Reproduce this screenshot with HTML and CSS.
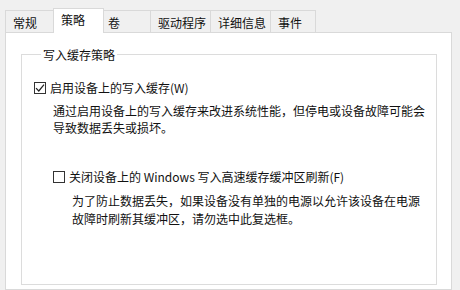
FILE: index.html
```html
<!DOCTYPE html>
<html lang="zh-CN">
<head>
<meta charset="utf-8">
<title>策略</title>
<link rel="stylesheet" href="styles.css">
</head>
<body>
<div class="dialog">
  <div class="tabs">
    <div class="tab w48">常规</div>
    <div class="tab active">策略</div>
    <div class="tab w46 narrow">卷</div>
    <div class="tab w60">驱动程序</div>
    <div class="tab w60">详细信息</div>
    <div class="tab w46 last">事件</div>
  </div>
  <div class="panel">
    <fieldset class="group">
      <legend class="legend">写入缓存策略</legend>
      <label class="row">
        <span class="check checked"><svg viewBox="0 0 12 12" width="12" height="12"><polyline points="2,6.2 4.8,9 10,2.6" fill="none" stroke="#222" stroke-width="1.2"/></svg></span>
        <span>启用设备上的写入缓存(W)</span>
      </label>
      <p class="desc">通过启用设备上的写入缓存来改进系统性能，但停电或设备故障可能会导致数据丢失或损坏。</p>
      <div class="sub">
        <label class="row">
          <span class="check"></span>
          <span>关闭设备上的 Windows 写入高速缓存缓冲区刷新(F)</span>
        </label>
        <p class="desc">为了防止数据丢失，如果设备没有单独的电源以允许该设备在电源故障时刷新其缓冲区，请勿选中此复选框。</p>
      </div>
    </fieldset>
  </div>
</div>
</body>
</html>
```

FILE: styles.css
```css
html, body {
  margin: 0;
  padding: 0;
}
body {
  width: 460px;
  height: 290px;
  overflow: hidden;
  background: #f0f0f0;
  font-family: "Microsoft YaHei UI", "Noto Sans CJK SC", sans-serif;
  font-size: 12px;
  color: #111;
}
.dialog {
  display: flex;
  flex-direction: column;
  height: 290px;
}
.tabs {
  display: flex;
  align-items: flex-end;
  padding-left: 5px;
  height: 32px;
  position: relative;
  z-index: 1;
}
.tab {
  box-sizing: border-box;
  height: 22px;
  line-height: 23px;
  padding: 0 0 0 7px;
  border-top: 1px solid #d9d9d9;
  border-left: 1px solid #d9d9d9;
  background: #f0f0f0;
}
.tab.last {
  border-right: 1px solid #d9d9d9;
}
.tab.narrow {
  padding-left: 4px;
}
.w48 { width: 48px; padding-left: 7px; }
.w46 { width: 46px; }
.w60 { width: 60px; }
.tab.active {
  width: 51px;
  height: 25px;
  margin-bottom: -1px;
  line-height: 22px;
  background: #fff;
  border-right: 1px solid #d9d9d9;
  padding-left: 7px;
}
.tab.active + .tab {
  border-left: none;
}
.panel {
  flex: 1;
  margin-left: 5px;
  width: 447px;
  box-sizing: border-box;
  border: 1px solid #d9d9d9;
  background: #fff;
  padding: 13px 14px 0 15px;
}
.group {
  margin: 0;
  border: 1px solid #dcdcdc;
  padding: 16px 8px 56px 12px;
  min-width: 0;
}
.legend {
  margin-left: 7px;
  padding: 0 2px;
  line-height: 17px;
}
.row {
  display: flex;
  align-items: center;
  gap: 4px;
  line-height: 17px;
}
.check {
  box-sizing: border-box;
  width: 12px;
  height: 12px;
  border: 1px solid #333;
  background: #fff;
  display: flex;
  align-items: center;
  justify-content: center;
}
.check svg {
  display: block;
  flex: none;
}
.desc {
  margin: 6px 0 0 19px;
  line-height: 17px;
}
.sub {
  margin: 32px 0 0 19px;
}
.sub .desc {
  margin-top: 7px;
  line-height: 18px;
}
```
